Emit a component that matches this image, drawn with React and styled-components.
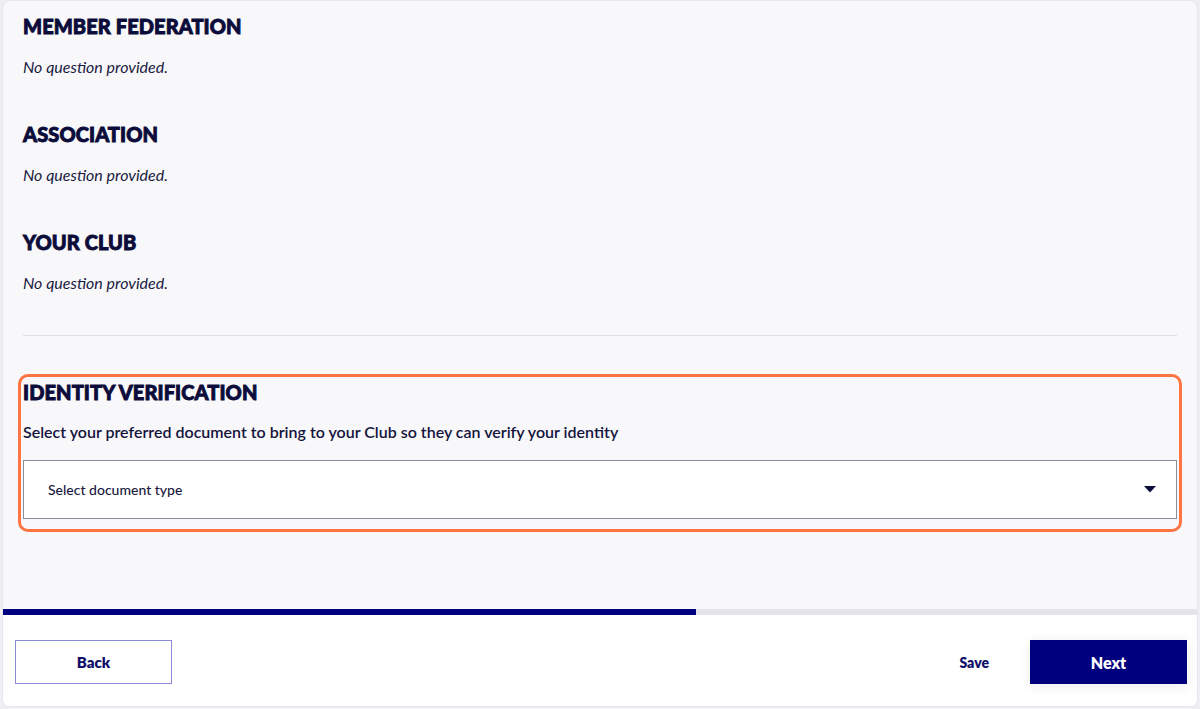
import React from 'react';
import styled, { createGlobalStyle } from 'styled-components';

const GlobalStyle = createGlobalStyle`
  html, body {
    margin: 0;
    padding: 0;
    background: #eeeef3;
    font-family: Lato, "Open Sans", sans-serif;
    color: #14143c;
  }
`;

const Card = styled.div`
  margin: 0 2px;
  height: 707px;
  box-sizing: border-box;
  background: #f8f8fb;
  border: 1px solid #e6e6ec;
  border-radius: 8px;
  overflow: hidden;
  display: flex;
  flex-direction: column;
`;

const Content = styled.div`
  height: 608px;
  padding: 13px 20px 0 20px;
  box-sizing: border-box;
  overflow: hidden;
`;

const Section = styled.section`
  margin-bottom: 45px;
`;

// the design font is a black weight; stroke thickens Lato bold to match
const Heading = styled.h2`
  margin: 0;
  font-family: Lato, sans-serif;
  font-weight: 900;
  font-size: 20px;
  line-height: 24px;
  text-transform: uppercase;
  color: #0c0c3a;
  -webkit-text-stroke: 0.9px #0c0c3a;
  letter-spacing: 0.1px;
`;

const Note = styled.p`
  margin: 19px 0 0;
  font-style: italic;
  font-size: 16px;
  line-height: 20px;
  color: #1a1a40;
`;

const Divider = styled.hr`
  border: 0;
  border-top: 1px solid #dedee4;
  margin: -3px 0 38px;
`;

const Highlight = styled.div`
  margin: 0 -5px;
  padding: 3px 2px 10px;
  border: 3px solid #ff7443;
  border-radius: 10px;
`;

const Description = styled.p`
  margin: 18px 0 18px;
  font-size: 16px;
  font-weight: 600;
  line-height: 20px;
  color: #14143c;
`;

const Select = styled.div`
  height: 59px;
  box-sizing: border-box;
  background: #fff;
  border: 1px solid #8a8ca0;
  display: flex;
  align-items: center;
  justify-content: space-between;
  padding: 0 20px 0 24px;
  font-size: 14px;
  font-weight: 500;
  color: #1a1a40;
`;

const Progress = styled.div`
  height: 6px;
  background: #e4e4ea;
  flex-shrink: 0;
`;

const ProgressFill = styled.div`
  height: 100%;
  background: #00007f;
`;

const Footer = styled.div`
  flex: 1;
  background: #fff;
  display: flex;
  align-items: flex-start;
  padding: 25px 10px 0 12px;
`;

const Button = styled.button`
  height: 44px;
  width: 157px;
  font-family: Lato, sans-serif;
  font-weight: 800;
  cursor: pointer;
  border-radius: 0;
  ${p => p.primary ? `
    background: #00007f;
    color: #fff;
    border: 0;
    font-size: 16px;
    box-shadow: 0 2px 12px rgba(0,0,60,0.08);
  ` : `
    background: #fff;
    color: #10106a;
    border: 1px solid #8a8ad6;
    font-size: 15px;
  `}
`;

const SaveLink = styled.button`
  margin-left: auto;
  margin-right: 35px;
  height: 44px;
  background: none;
  border: 0;
  font-family: Lato, sans-serif;
  font-weight: 800;
  font-size: 14px;
  color: #10106a;
  cursor: pointer;
`;

const sections = ['Member Federation', 'Association', 'Your Club'];

export default function App() {
  const progress = 58;
  return (
    <>
      <GlobalStyle />
      <Card>
        <Content>
          {sections.map(s => (
            <Section key={s}>
              <Heading>{s}</Heading>
              <Note>No question provided.</Note>
            </Section>
          ))}
          <Divider />
          <Highlight>
            <Heading>Identity Verification</Heading>
            <Description>Select your preferred document to bring to your Club so they can verify your identity</Description>
            <Select>
              <span>Select document type</span>
              <svg width="12" height="7" viewBox="0 0 12 7">
                <path d="M0 0 H12 L6 6.5 Z" fill="#0c0c3a" />
              </svg>
            </Select>
          </Highlight>
        </Content>
        <Progress>
          <ProgressFill style={{ width: `${progress}%` }} />
        </Progress>
        <Footer>
          <Button>Back</Button>
          <SaveLink>Save</SaveLink>
          <Button primary>Next</Button>
        </Footer>
      </Card>
    </>
  );
}
